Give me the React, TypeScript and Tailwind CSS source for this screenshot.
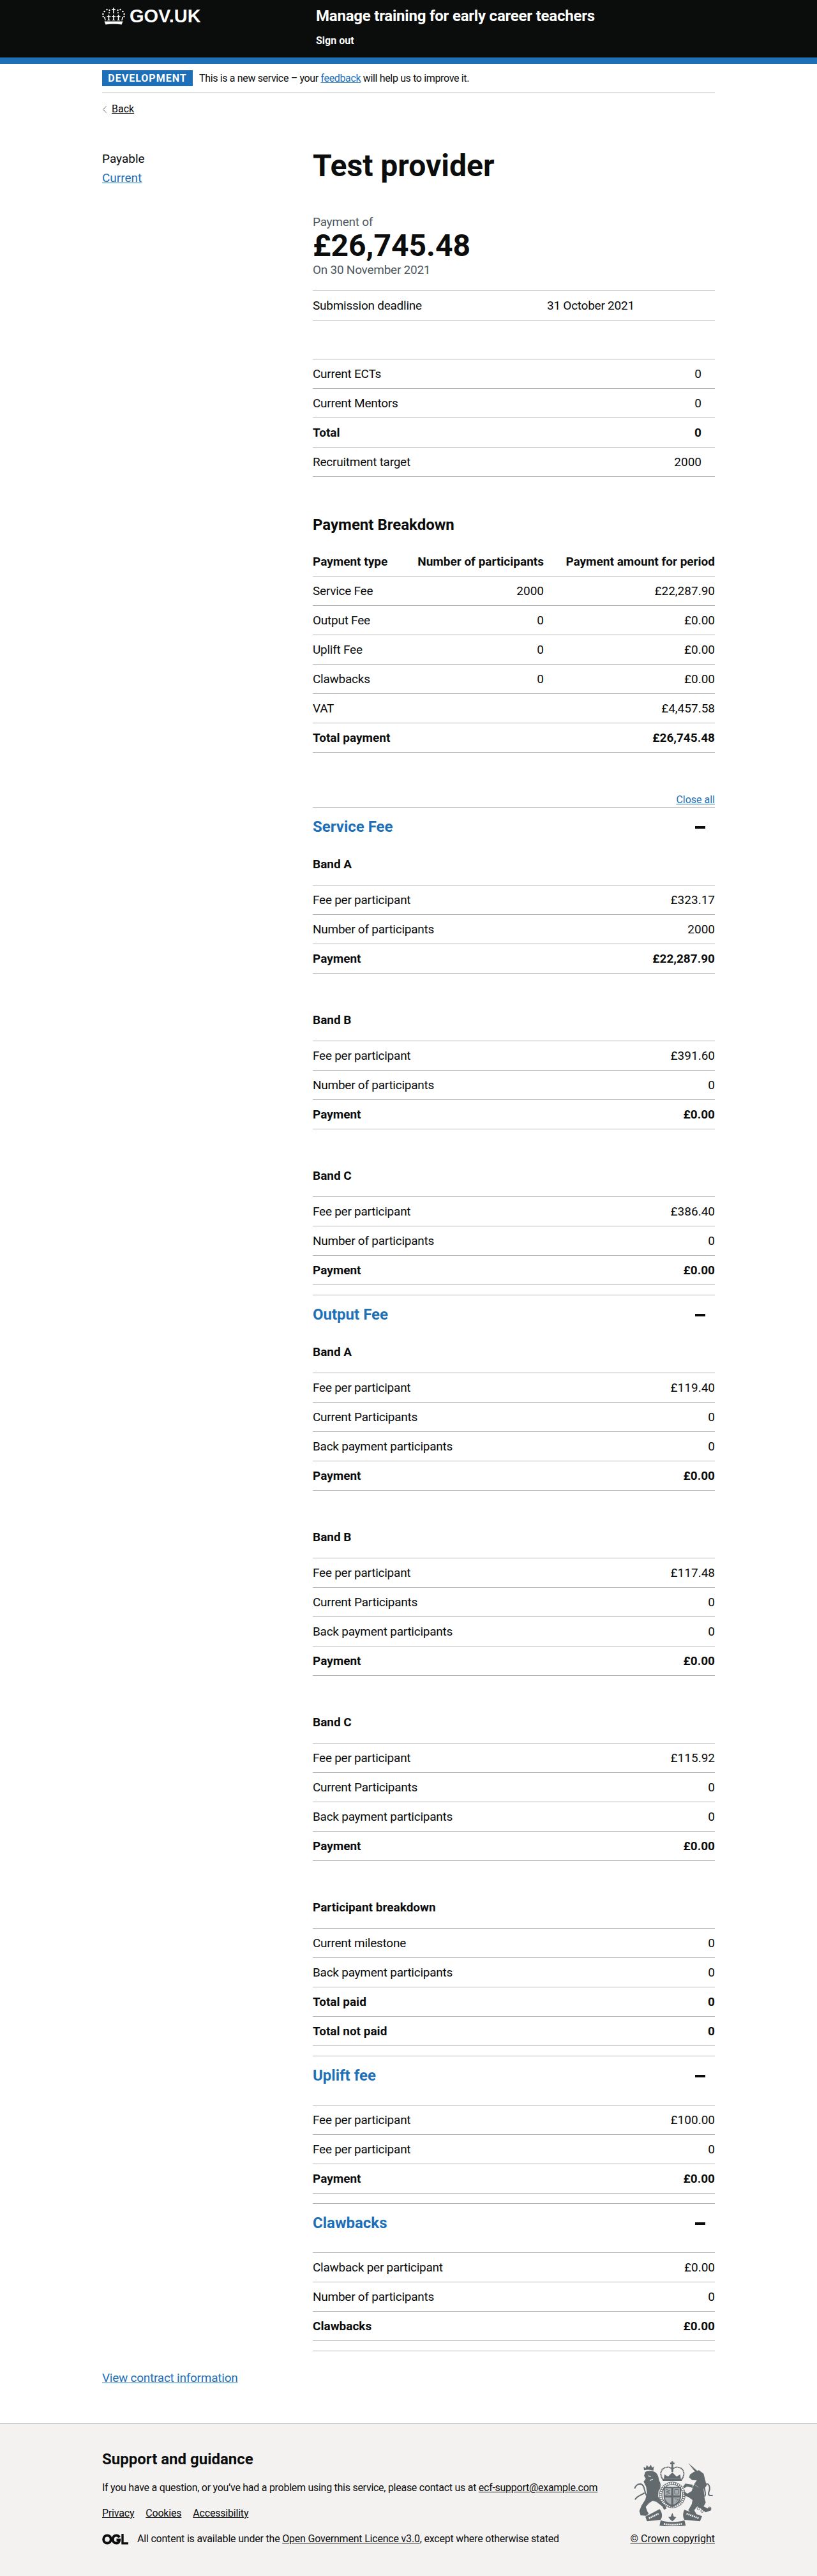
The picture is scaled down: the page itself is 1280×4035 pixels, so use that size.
import type { ReactNode } from 'react';

type RowData = { label: string; value: string; bold?: boolean };

const Row = ({ label, value, bold, inset }: RowData & { inset?: boolean }) => (
  <div className={`flex h-[46px] items-center justify-between border-b border-[#b1b4b6] ${bold ? 'font-bold' : ''} ${inset ? 'pr-[21px]' : ''}`}>
    <span className={bold ? '' : 'tracking-[-0.25px]'}>{label}</span>
    <span>{value}</span>
  </div>
);

const Rows = ({ rows, inset }: { rows: RowData[]; inset?: boolean }) => (
  <div className="border-t border-[#b1b4b6]">
    {rows.map((r, i) => (
      <Row key={i} {...r} inset={inset} />
    ))}
  </div>
);

const Band = ({ title, rows }: { title: string; rows: RowData[] }) => (
  <div>
    <h3 className="mb-[20px] h-[25px] font-bold leading-[25px]">{title}</h3>
    <Rows rows={rows} />
  </div>
);

const Section = ({ title, children }: { title: string; children: ReactNode }) => (
  <section className="border-t border-[#b1b4b6] pb-[15px]">
    <div className="flex h-[61px] items-center justify-between">
      <h2 className="text-[24px] font-bold text-[#1d70b8]">{title}</h2>
      <span className="mr-[15px] h-[4px] w-[16px] bg-[#0b0c0c]" />
    </div>
    <div className="flex flex-col gap-[60px] pt-[15px]">{children}</div>
  </section>
);

const Crown = () => (
  <svg width="36" height="27" viewBox="0 0 36 27" fill="#fff" aria-hidden="true">
    <rect x="17.2" y="0" width="1.6" height="9" />
    <rect x="15.3" y="2" width="5.4" height="1.6" />
    <circle cx="11.5" cy="4" r="1.2" />
    <circle cx="24.5" cy="4" r="1.2" />
    <circle cx="7.5" cy="3" r="1.2" />
    <circle cx="28.5" cy="3" r="1.2" />
    <circle cx="3.6" cy="6" r="1.3" />
    <circle cx="32.4" cy="6" r="1.3" />
    <circle cx="1.4" cy="10" r="1.3" />
    <circle cx="34.6" cy="10" r="1.3" />
    <circle cx="1.6" cy="14" r="1.2" />
    <circle cx="34.4" cy="14" r="1.2" />
    <circle cx="11" cy="8" r="1" />
    <circle cx="25" cy="8" r="1" />
    <path d="M9.6 11h1.6v2.2h2.2v1.5h-2.2v3.8L13.5 20H7.3l2.3-1.5v-3.8H7.4v-1.5h2.2z" />
    <path d="M17.2 11h1.6v2.2H21v1.5h-2.2v3.8L21.1 20h-6.2l2.3-1.5v-3.8H15v-1.5h2.2z" />
    <path d="M24.8 11h1.6v2.2h2.2v1.5h-2.2v3.8l2.3 1.5h-6.2l2.3-1.5v-3.8h-2.2v-1.5h2.2z" />
    <path d="M3 15l1.6-.6 1.2 5.6H4.4zM33 15l-1.6-.6-1.2 5.6h1.4z" />
    <path d="M3.5 21.5h29l-2 5c-8-1.400-17-1.400-25 0z" />
  </svg>
);

const OglLogo = () => (
  <svg width="41" height="17" viewBox="0 0 41 17" fill="none" stroke="#0b0c0c" aria-hidden="true">
    <ellipse cx="8" cy="8.5" rx="5.8" ry="6.1" strokeWidth="4" />
    <path d="M27 5.5c-.9-1.900-2.600-3-4.700-3-3.300 0-5.600 2.600-5.600 6s2.300 6 5.600 6c2.900 0 4.900-1.800 4.900-4.900H22.500" strokeWidth="4" />
    <path d="M32 0v14.900h9" strokeWidth="3.4" />
  </svg>
);

// royal arms, drawn as silhouettes; the dashes stand in for the tiny motto lettering
const RoyalArms = () => (
  <svg width="125" height="102" viewBox="21 9 375 306" fill="#626a6e" aria-hidden="true">
    <path d="M72 52L70 36l10 6 5-14 10 10 9-12 6 14 8-6-2 20q-21-8-44-2z" />
    <path d="M78 60c14-8 40-8 52 6 12 12 10 32 18 44 4 12 2 30-8 40l-2 25 14 21 18 16 8 20-12 6-8-16-28-22-18-4-16 10-16 18 8 22 6 10-12 10-26-2-6-20 10-26 18-28 8-32-4-28-12-24 10-14-8-14z" />
    <path d="M92 78l12 4M100 100l14-6" fill="none" stroke="#f3f2f1" strokeWidth="4" />
    <path d="M84 172c-12-20-8-54-30-56-16 0-24 14-26 22M74 158c-14 12-34 12-44 32" fill="none" stroke="#626a6e" strokeWidth="6" />
    <rect x="201" y="10" width="8" height="50" />
    <rect x="195" y="16" width="20" height="8" />
    <path d="M160 95c-20-30-5-60 30-57 10 2 15 10 15 17 0-7 7-15 17-17 33-3 48 27 28 57" fill="none" stroke="#626a6e" strokeWidth="6" strokeDasharray="6 1.500" />
    <path d="M165 92l3-20 17 10 20-20 20 20 17-10 3 20z" />
    <rect x="160" y="92" width="90" height="10" />
    <circle cx="205" cy="168" r="62" />
    <circle cx="205" cy="168" r="55" fill="none" stroke="#f3f2f1" strokeWidth="9" strokeDasharray="6 3.500" />
    <circle cx="205" cy="168" r="47" fill="#f3f2f1" />
    <path d="M164 130h82v44c0 28-22 44-41 52-19-8-41-24-41-52z" />
    <path d="M170 136h30v34h-30zM210 136h30v34h-30zM170 180h30v34c-14-6-28-18-30-34zM210 180h30c-2 16-16 28-30 34z" fill="#a8adaf" />
    <path d="M176 142l18 6-18 6 18 6-18 6M216 186l18 2-12 12M216 142h18v22h-18z" fill="none" stroke="#626a6e" strokeWidth="3" />
    <path d="M280 18l42 37-8 7z" />
    <path d="M288 72l18-12 24-8 22 16 8 32 6 25-14 15 4 40 6 25-10 17 20 10 12-6 4 14-26 10-24-18-16-10-14 18 10 18-14 4-24-22 16-28 4-20-20-14-18-6-4-22 18 12 20-12 10-30 14-20-22-2-14-12z" />
    <path d="M300 120l-34-5-11 15 7 6 13-8 27 7z" />
    <path d="M292 108l36 24" fill="none" stroke="#f3f2f1" strokeWidth="3" strokeDasharray="3 3" />
    <path d="M356 175c14-10-11-45 6-57 13-8 23 12 16 32-6 15-3 25 17 20" fill="none" stroke="#626a6e" strokeWidth="6" />
    <circle cx="328" cy="232" r="6" fill="none" stroke="#626a6e" strokeWidth="3" />
    <circle cx="345" cy="244" r="6" fill="none" stroke="#626a6e" strokeWidth="3" />
    <circle cx="380" cy="232" r="7" fill="none" stroke="#626a6e" strokeWidth="3" />
    <path d="M78 270l67-35c13 15 15 35 5 50l-64 7z" />
    <path d="M262 238l83 30-10 24-73-7c-10-15-7-35 0-47z" />
    <path d="M150 287c30 11 80 11 112 0l6 25c-38 6-88 6-123 0z" />
    <path d="M205 252l7 18 12 2-10 12-9 8-9-8-10-12 12-2z" />
    <path d="M95 278l45-22M272 256l58 22M165 304c25 5 57 5 85 0" fill="none" stroke="#f3f2f1" strokeWidth="8" strokeDasharray="6 3" />
  </svg>
);

const bands = {
  serviceA: [
    { label: 'Fee per participant', value: '£323.17' },
    { label: 'Number of participants', value: '2000' },
    { label: 'Payment', value: '£22,287.90', bold: true },
  ],
  serviceB: [
    { label: 'Fee per participant', value: '£391.60' },
    { label: 'Number of participants', value: '0' },
    { label: 'Payment', value: '£0.00', bold: true },
  ],
  serviceC: [
    { label: 'Fee per participant', value: '£386.40' },
    { label: 'Number of participants', value: '0' },
    { label: 'Payment', value: '£0.00', bold: true },
  ],
};

const outputRows = (fee: string): RowData[] => [
  { label: 'Fee per participant', value: fee },
  { label: 'Current Participants', value: '0' },
  { label: 'Back payment participants', value: '0' },
  { label: 'Payment', value: '£0.00', bold: true },
];

const breakdown = [
  { type: 'Service Fee', count: '2000', amount: '£22,287.90' },
  { type: 'Output Fee', count: '0', amount: '£0.00' },
  { type: 'Uplift Fee', count: '0', amount: '£0.00' },
  { type: 'Clawbacks', count: '0', amount: '£0.00' },
  { type: 'VAT', count: '', amount: '£4,457.58' },
];

const cellRow = 'grid h-[46px] grid-cols-[164px_198px_268px] items-center border-b border-[#b1b4b6]';

export default function App() {
  return (
    <div className="font-['Roboto',sans-serif] text-[19px] leading-[25px] text-[#0b0c0c]">
      <header className="border-b-[10px] border-[#1d70b8] bg-[#0b0c0c] text-white">
        <div className="mx-auto flex h-[90px] w-[960px]">
          <a href="#" className="flex h-[50px] w-[335px] items-center gap-[7px]">
            <Crown />
            <span className="font-['Liberation_Sans',Arial,sans-serif] text-[29px] font-bold leading-none">GOV.UK</span>
          </a>
          <div className="pt-[10px]">
            <div className="text-[24px] font-bold leading-[30px] tracking-[-0.22px]">Manage training for early career teachers</div>
            <div className="pt-[14px] text-[16px] font-bold leading-[20px]">Sign out</div>
          </div>
        </div>
      </header>

      <div className="mx-auto w-[960px]">
        <div className="flex items-center gap-[10px] border-b border-[#b1b4b6] py-[10px] text-[16px] leading-[20px]">
          <strong className="flex h-[25px] w-[142px] items-center justify-center bg-[#1d70b8] font-bold uppercase tracking-[1px] text-white">Development</strong>
          <span className="tracking-[-0.35px]">
            This is a new service – your <a href="#" className="text-[#1d70b8] underline">feedback</a> will help us to improve it.
          </span>
        </div>

        <a href="#" className="mt-[15px] flex items-center gap-[8px] text-[16px] leading-[20px]">
          <svg width="6" height="11" viewBox="0 0 6 11" fill="none" stroke="#505a5f" strokeWidth="1" className="ml-px" aria-hidden="true">
            <path d="M5.5.5l-5 5 5 5" />
          </svg>
          <span className="underline">Back</span>
        </a>

        <main className="flex pt-[54px]">
          <nav className="w-[330px] pt-[1px]">
            <p className="mb-[5px]">Payable</p>
            <a href="#" className="text-[#1d70b8] underline">Current</a>
          </nav>

          <div className="w-[630px]">
            <h1 className="mb-[50px] text-[48px] font-bold leading-[50px]">Test provider</h1>
            <p className="tracking-[-0.25px] text-[#505a5f]">Payment of</p>
            <p className="text-[48px] font-bold leading-[50px]">£26,745.48</p>
            <p className="mb-[20px] tracking-[-0.25px] text-[#505a5f]">On 30 November 2021</p>

            <div className="mb-[60px] border-t border-[#b1b4b6]">
              <div className="flex h-[46px] items-center border-b border-[#b1b4b6] tracking-[-0.25px]">
                <span className="w-[367px]">Submission deadline</span>
                <span>31 October 2021</span>
              </div>
            </div>

            <Rows
              inset
              rows={[
                { label: 'Current ECTs', value: '0' },
                { label: 'Current Mentors', value: '0' },
                { label: 'Total', value: '0', bold: true },
                { label: 'Recruitment target', value: '2000' },
              ]}
            />

            <h2 className="mb-[20px] mt-[60px] text-[24px] font-bold leading-[30px]">Payment Breakdown</h2>
            <div className={`${cellRow} font-bold`}>
              <span>Payment type</span>
              <span className="text-right">Number of participants</span>
              <span className="text-right">Payment amount for period</span>
            </div>
            {breakdown.map((b) => (
              <div key={b.type} className={cellRow}>
                <span className="tracking-[-0.25px]">{b.type}</span>
                <span className="text-right">{b.count}</span>
                <span className="text-right">{b.amount}</span>
              </div>
            ))}
            <div className={`${cellRow} font-bold`}>
              <span>Total payment</span>
              <span />
              <span className="text-right">£26,745.48</span>
            </div>

            <div className="mb-px mt-[64px] text-right text-[16px] leading-[20px]">
              <a href="#" className="text-[#1d70b8] underline">Close all</a>
            </div>

            <div className="border-b border-[#b1b4b6]">
              <Section title="Service Fee">
                <Band title="Band A" rows={bands.serviceA} />
                <Band title="Band B" rows={bands.serviceB} />
                <Band title="Band C" rows={bands.serviceC} />
              </Section>
              <Section title="Output Fee">
                <Band title="Band A" rows={outputRows('£119.40')} />
                <Band title="Band B" rows={outputRows('£117.48')} />
                <Band title="Band C" rows={outputRows('£115.92')} />
                <Band
                  title="Participant breakdown"
                  rows={[
                    { label: 'Current milestone', value: '0' },
                    { label: 'Back payment participants', value: '0' },
                    { label: 'Total paid', value: '0', bold: true },
                    { label: 'Total not paid', value: '0', bold: true },
                  ]}
                />
              </Section>
              <Section title="Uplift fee">
                <Rows
                  rows={[
                    { label: 'Fee per participant', value: '£100.00' },
                    { label: 'Fee per participant', value: '0' },
                    { label: 'Payment', value: '£0.00', bold: true },
                  ]}
                />
              </Section>
              <Section title="Clawbacks">
                <Rows
                  rows={[
                    { label: 'Clawback per participant', value: '£0.00' },
                    { label: 'Number of participants', value: '0' },
                    { label: 'Clawbacks', value: '£0.00', bold: true },
                  ]}
                />
              </Section>
            </div>
          </div>
        </main>

        <a href="#" className="mb-[59px] mt-[29px] block tracking-[-0.25px] text-[#1d70b8] underline">View contract information</a>
      </div>

      <footer className="border-t border-[#b1b4b6] bg-[#f3f2f1] pb-[50px] pt-[40px] text-[16px] leading-[20px]">
        <div className="mx-auto flex w-[960px] items-end justify-between">
          <div>
            <h2 className="mb-[20px] text-[24px] font-bold leading-[30px]">Support and guidance</h2>
            <p className="mb-[20px] tracking-[-0.27px]">
              If you have a question, or you’ve had a problem using this service, please contact us at <a href="#" className="underline">ecf-support@example.com</a>
            </p>
            <div className="mb-[20px] flex gap-[18px] tracking-[-0.2px]">
              <a href="#" className="underline">Privacy</a>
              <a href="#" className="underline">Cookies</a>
              <a href="#" className="underline">Accessibility</a>
            </div>
            <div className="flex items-center gap-[14px] tracking-[-0.2px]">
              <OglLogo />
              <span>
                All content is available under the <a href="#" className="underline">Open Government Licence v3.0</a>, except where otherwise stated
              </span>
            </div>
          </div>
          <div className="flex flex-col items-end">
            <div className="mb-[10px] mr-[3px]">
              <RoyalArms />
            </div>
            <a href="#" className="underline">© Crown copyright</a>
          </div>
        </div>
      </footer>
    </div>
  );
}
